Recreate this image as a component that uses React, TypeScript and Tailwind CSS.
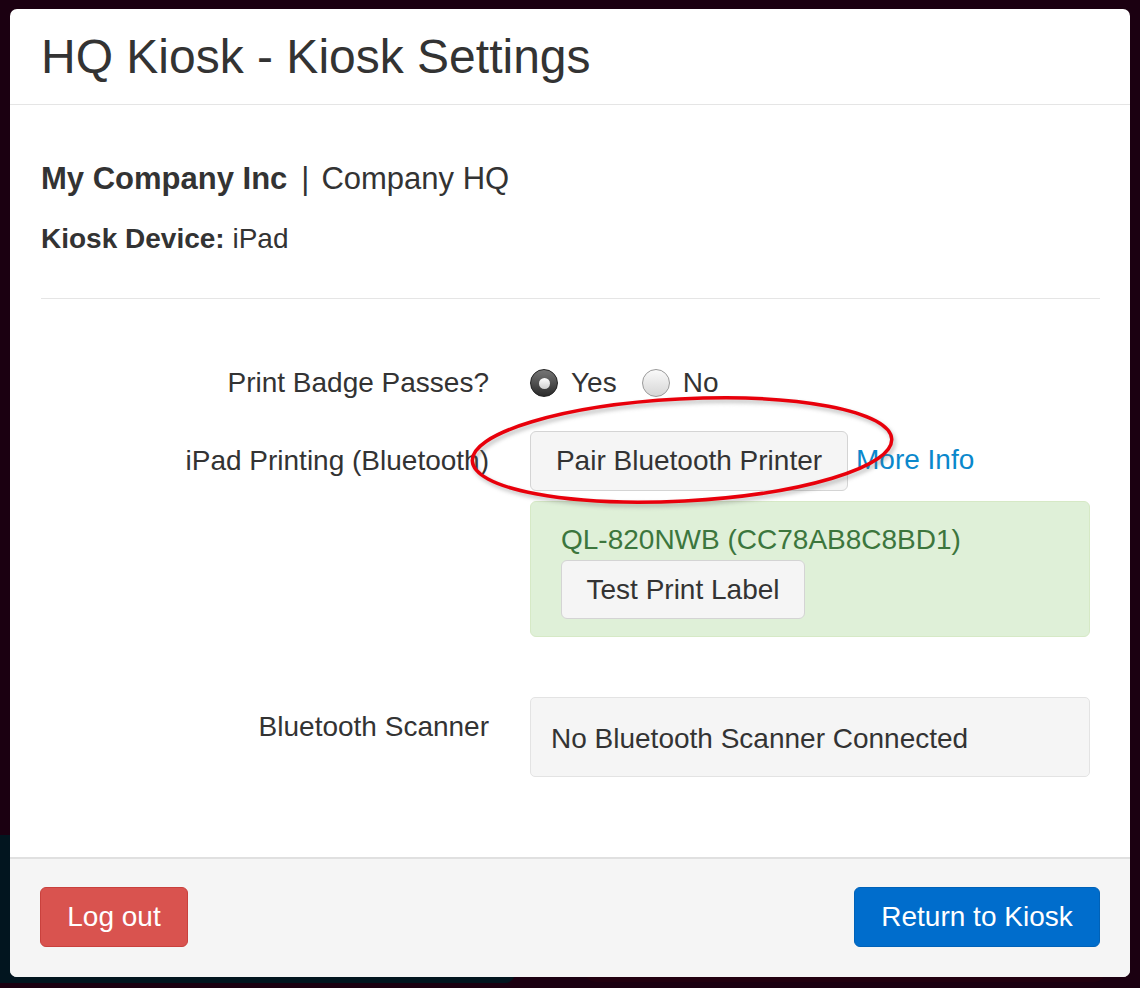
import React from 'react';

const font = { fontFamily: '"Liberation Sans", Arial, Helvetica, sans-serif' };

const Radio: React.FC<{ checked?: boolean }> = ({ checked }) =>
    checked ? (
        <span className="inline-flex shrink-0 w-[28px] h-[28px] rounded-full border border-[#222] bg-gradient-to-b from-[#7a7a7a] to-[#2b2b2b] items-center justify-center shadow-inner">
            <span className="block w-[11px] h-[11px] rounded-full bg-gradient-to-b from-white to-[#cfcfcf]" />
        </span>
    ) : (
        <span className="inline-block shrink-0 w-[28px] h-[28px] rounded-full border border-[#9a9a9a] bg-gradient-to-b from-[#fafafa] to-[#d6d6d6]" />
    );

export default function App() {
    return (
        <div className="relative w-[1140px] h-[988px] bg-[#1b0011] overflow-hidden" style={font}>
            {/* Backdrop blocks behind the modal */}
            <div className="absolute left-0 top-[835px] w-[515px] h-[148px] bg-[#02151f] rounded-br-[10px]" />
            <div className="absolute left-[585px] top-[940px] w-[520px] h-[42px] bg-[#22000f] rounded-b-[10px]" />

            {/* Modal */}
            <div className="relative ml-[10px] pt-[9px]">
                <div className="w-[1120px] bg-white rounded-[7px] overflow-hidden flex flex-col text-[#333]">
                    {/* Header */}
                    <div className="h-[96px] border-b border-[#e5e5e5] px-[31px] flex items-center">
                        <h1 className="text-[48px] leading-none font-normal">HQ Kiosk - Kiosk Settings</h1>
                    </div>

                    {/* Body */}
                    <div className="pl-[31px] pr-[30px] pt-[57px] pb-[80px]">
                        <p className="text-[31px] leading-[34px]">
                            <span className="font-bold">My Company Inc</span>
                            <span className="ml-[14px] mr-[12px]">|</span>Company HQ
                        </p>
                        <p className="text-[28px] leading-[34px] mt-[26px]">
                            <span className="font-bold">Kiosk Device:</span> iPad
                        </p>
                        <div className="mt-[42px] border-t border-[#e5e5e5]" />

                        {/* Form */}
                        <div className="mt-[64px] flex flex-col text-[28px] leading-[34px]">
                            <div className="flex items-center h-[40px] gap-[41px]">
                                <div className="w-[448px] text-right">Print Badge Passes?</div>
                                <div className="flex items-center">
                                    <Radio checked />
                                    <span className="ml-[13px]">Yes</span>
                                    <span className="ml-[25px] flex"><Radio /></span>
                                    <span className="ml-[13px]">No</span>
                                </div>
                            </div>

                            <div className="relative flex gap-[41px] mt-[28px]">
                                <div className="w-[448px] text-right pt-[13px]">iPad Printing (Bluetooth)</div>
                                <div className="w-[560px] flex flex-col">
                                    <div className="flex items-center">
                                        <button className="h-[60px] w-[318px] bg-[#f5f5f5] border border-[#d4d4d4] rounded-[6px] text-[#333]">
                                            Pair Bluetooth Printer
                                        </button>
                                        <a className="ml-[8px] text-[#0a88cc] -mt-[3px]">More Info</a>
                                    </div>
                                    <div className="mt-[10px] h-[136px] bg-[#dff0d8] border border-[#d6e9c6] rounded-[6px] px-[30px] pt-[21px]">
                                        <p className="text-[#3c763d]">QL-820NWB (CC78AB8C8BD1)</p>
                                        <button className="mt-[3px] h-[59px] w-[244px] bg-[#f5f5f5] border border-[#d4d4d4] rounded-[6px] text-[#333]">
                                            Test Print Label
                                        </button>
                                    </div>
                                </div>

                                {/* Red annotation ring */}
                                <svg className="absolute left-[421px] top-[-41px] pointer-events-none" width="460" height="130" viewBox="0 0 460 130">
                                    <defs>
                                        <filter id="blur" x="-10%" y="-30%" width="120%" height="160%">
                                            <feGaussianBlur stdDeviation="2" />
                                        </filter>
                                    </defs>
                                    <ellipse cx="222" cy="63" rx="210" ry="51" transform="rotate(-3 222 63)" fill="none" stroke="#666" strokeWidth="3" opacity="0.5" filter="url(#blur)" />
                                    <ellipse cx="220" cy="60" rx="210" ry="51" transform="rotate(-3 220 60)" fill="none" stroke="#e8000b" strokeWidth="3.5" />
                                </svg>
                            </div>

                            <div className="flex gap-[41px] mt-[60px]">
                                <div className="w-[448px] text-right pt-[13px]">Bluetooth Scanner</div>
                                <div className="w-[560px] h-[80px] bg-[#f5f5f5] border border-[#e3e3e3] rounded-[5px] flex items-center px-[20px] pt-[3px]">
                                    No Bluetooth Scanner Connected
                                </div>
                            </div>
                        </div>
                    </div>

                    {/* Footer */}
                    <div className="border-t-2 border-[#e0e0e0] bg-[#f5f5f5] h-[120px] px-[30px] flex items-start justify-between pt-[28px]">
                        <button className="h-[60px] w-[148px] bg-[#d9534f] border border-[#c9413d] rounded-[6px] text-white text-[28px]">
                            Log out
                        </button>
                        <button className="h-[60px] w-[246px] bg-[#006dcc] border border-[#0062b8] rounded-[6px] text-white text-[28px]">
                            Return to Kiosk
                        </button>
                    </div>
                </div>
            </div>
        </div>
    );
}
